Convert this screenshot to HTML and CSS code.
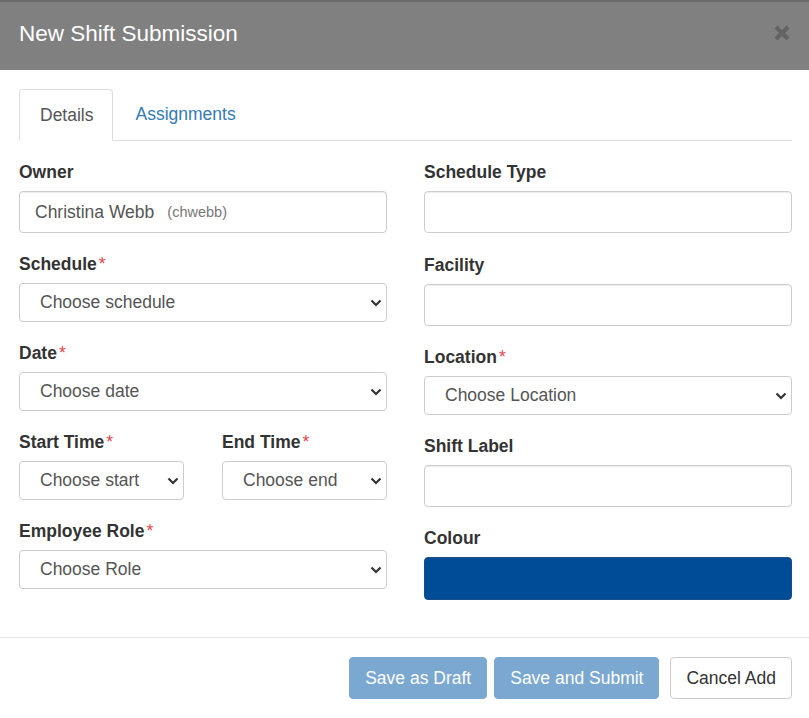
FILE: index.html
```html
<!DOCTYPE html>
<html>
<head>
<meta charset="utf-8">
<link rel="stylesheet" href="styles.css">
</head>
<body>
<div class="modal">
  <div class="modal-header">
    <h1 class="modal-title">New Shift Submission</h1>
    <span class="close" aria-label="Close">
      <svg width="18" height="18" viewBox="0 0 18 18"><path d="M3 3 L15 15 M15 3 L3 15" stroke="#636363" stroke-width="4.2" stroke-linecap="butt"/></svg>
    </span>
  </div>
  <div class="modal-body">
    <div class="tabs">
      <div class="tab active">Details</div>
      <div class="tab link">Assignments</div>
    </div>
    <div class="form-grid">
      <div class="col">
        <div class="field">
          <div class="label">Owner</div>
          <div class="control input owner"><span class="name">Christina Webb</span><span class="user">(chwebb)</span></div>
        </div>
        <div class="field">
          <div class="label">Schedule<span class="req">*</span></div>
          <div class="control select"><span>Choose schedule</span><svg class="chev" width="12" height="8" viewBox="0 0 12 8"><path d="M1.5 1.5 L6 6 L10.5 1.5" fill="none" stroke="#333" stroke-width="2.2"/></svg></div>
        </div>
        <div class="field">
          <div class="label">Date<span class="req">*</span></div>
          <div class="control select"><span>Choose date</span><svg class="chev" width="12" height="8" viewBox="0 0 12 8"><path d="M1.5 1.5 L6 6 L10.5 1.5" fill="none" stroke="#333" stroke-width="2.2"/></svg></div>
        </div>
        <div class="pair">
          <div class="field">
            <div class="label">Start Time<span class="req">*</span></div>
            <div class="control select"><span>Choose start</span><svg class="chev" width="12" height="8" viewBox="0 0 12 8"><path d="M1.5 1.5 L6 6 L10.5 1.5" fill="none" stroke="#333" stroke-width="2.2"/></svg></div>
          </div>
          <div class="field">
            <div class="label">End Time<span class="req">*</span></div>
            <div class="control select"><span>Choose end</span><svg class="chev" width="12" height="8" viewBox="0 0 12 8"><path d="M1.5 1.5 L6 6 L10.5 1.5" fill="none" stroke="#333" stroke-width="2.2"/></svg></div>
          </div>
        </div>
        <div class="field">
          <div class="label">Employee Role<span class="req">*</span></div>
          <div class="control select"><span>Choose Role</span><svg class="chev" width="12" height="8" viewBox="0 0 12 8"><path d="M1.5 1.5 L6 6 L10.5 1.5" fill="none" stroke="#333" stroke-width="2.2"/></svg></div>
        </div>
      </div>
      <div class="col">
        <div class="field first-right">
          <div class="label">Schedule Type</div>
          <div class="control input"></div>
        </div>
        <div class="field">
          <div class="label">Facility</div>
          <div class="control input"></div>
        </div>
        <div class="field">
          <div class="label">Location<span class="req">*</span></div>
          <div class="control select"><span>Choose Location</span><svg class="chev" width="12" height="8" viewBox="0 0 12 8"><path d="M1.5 1.5 L6 6 L10.5 1.5" fill="none" stroke="#333" stroke-width="2.2"/></svg></div>
        </div>
        <div class="field">
          <div class="label">Shift Label</div>
          <div class="control input"></div>
        </div>
        <div class="field">
          <div class="label">Colour</div>
          <div class="control colour"></div>
        </div>
      </div>
    </div>
  </div>
  <div class="modal-footer">
    <button class="btn primary">Save as Draft</button>
    <button class="btn primary submit">Save and Submit</button>
    <button class="btn default cancel">Cancel Add</button>
  </div>
</div>
</body>
</html>
```

FILE: styles.css
```css
* { box-sizing: border-box; }
html, body { margin: 0; padding: 0; }
body {
  font-family: "Liberation Sans", Arial, sans-serif;
  background: #ffffff;
  color: #333;
  width: 809px;
  height: 718px;
  overflow: hidden;
}
.modal { background: #fff; }
.modal-header {
  height: 70px;
  background: #808080;
  border-top: 2px solid #6c6c6c;
  display: flex;
  align-items: center;
  justify-content: space-between;
  padding: 0 19px 0 19px;
}
.modal-title {
  margin: 0;
  font-size: 22.5px;
  font-weight: normal;
  color: #fff;
  padding-bottom: 4px;
}
.close { display: flex; margin-right: -1px; margin-bottom: 7px; }
.modal-body { padding: 19px 17px 18px 19px; }
.tabs {
  display: flex;
  border-bottom: 1px solid #ddd;
  height: 52px;
}
.tab {
  font-size: 17.5px;
  height: 52px;
  line-height: 50px;
  padding: 0 20px;
}
.tab.active {
  color: #555;
  border: 1px solid #ddd;
  border-bottom-color: #fff;
  border-radius: 4px 4px 0 0;
  background: #fff;
  padding: 0 18px 0 20px;
}
.tab.link { color: #337ab7; padding-left: 23px; }
.form-grid {
  display: grid;
  grid-template-columns: 368px 368px;
  column-gap: 37px;
  padding-top: 19px;
}
.field { margin-bottom: 19px; }
.first-right { margin-bottom: 20px; }
.label {
  font-size: 17.5px;
  font-weight: bold;
  line-height: 22px;
  height: 23px;
  padding-top: 1px;
  margin-bottom: 8px;
  color: #333;
}
.req { color: #e0474c; font-weight: normal; margin-left: 2px; }
.control {
  border: 1px solid #ccc;
  border-radius: 4px;
  background: #fff;
  font-size: 17.5px;
  color: #555;
}
.input {
  height: 42px;
  box-shadow: inset 0 1px 1px rgba(0,0,0,0.075);
}
.owner {
  display: flex;
  align-items: center;
  padding-left: 15px;
  color: #555;
}
.owner .user { font-size: 14.5px; color: #777; margin-left: 13px; }
.select {
  height: 39px;
  display: flex;
  align-items: center;
  justify-content: space-between;
  padding: 0 4px 0 20px;
}
.chev { flex: none; }
.pair {
  display: grid;
  grid-template-columns: 165px 165px;
  column-gap: 38px;
}
.colour {
  height: 43px;
  background: #004c97;
  border-color: #1a4f86;
}
.modal-footer {
  border-top: 1px solid #e5e5e5;
  padding: 19px 17px 19px 19px;
  display: flex;
  justify-content: flex-end;
}
.btn {
  font-family: "Liberation Sans", Arial, sans-serif;
  font-size: 17.5px;
  height: 42px;
  border-radius: 4px;
  border: 1px solid transparent;
  padding: 0 15px;
  margin: 0;
}
.primary { background: #7aa8d0; color: #fff; border-color: #7aa8d0; }
.submit { margin-left: 7px; }
.default { background: #fff; color: #333; border-color: #ccc; }
.cancel { margin-left: 11px; }
```
